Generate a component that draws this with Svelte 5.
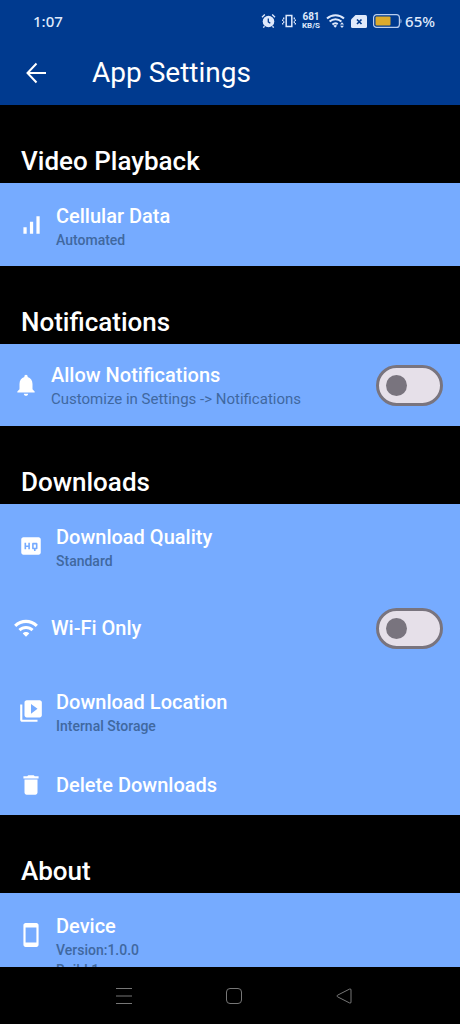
<script>
  let allowNotifications = $state(false);
  let wifiOnly = $state(false);
</script>

{#snippet icon(d)}
  <svg class="icon" viewBox="0 0 24 24" aria-hidden="true"><path {d} /></svg>
{/snippet}

{#snippet row(d, title, lines)}
  <button class="row" class:single={lines.length === 0}>
    {@render icon(d)}
    <span class="text">
      <span class="title">{title}</span>
      {#each lines as line}<span class="sub">{line}</span>{/each}
    </span>
  </button>
{/snippet}

<div class="screen">
  <header>
    <div class="status">
      <span class="time">1:07</span>
      <div class="indicators">
        <svg width="15" height="16" viewBox="0 0 15 16" aria-label="Alarm">
          <circle cx="7.5" cy="8.5" r="5.8" fill="#dfe9fb" />
          <path d="M1 4.2 3.8 1.6M14 4.2 11.2 1.6M3.5 13.2 2.3 14.6M11.5 13.2l1.2 1.4" stroke="#dfe9fb" stroke-width="1.4" fill="none" />
          <path d="M7.3 5.4v3.4l2 1.4" stroke="#003a8f" stroke-width="1.3" fill="none" />
        </svg>
        <svg width="14" height="14" viewBox="0 0 14 14" aria-label="Vibrate">
          <path d="M4.200 1.500h5.600v11H4.200z" stroke="#dfe9fb" stroke-width="1.5" fill="none" />
          <path d="M1.700 3.500v1.700M.7 5.500v1.600M1.700 7.300v1.600M.7 9v1.500M12.300 3.500v1.700M13.300 5.500v1.600M12.300 7.300v1.600M13.300 9v1.500" stroke="#dfe9fb" stroke-width="1.3" fill="none" />
        </svg>
        <span class="speed"><b>681</b><b class="unit">KB/S</b></span>
        <svg width="19" height="16" viewBox="0 0 19 16" aria-label="Wi-Fi">
          <path d="M1 5.5c4.700-4.400 12.300-4.400 17 0M3.600 8.600c3.400-3.100 8.400-3.100 11.800 0M6.400 11.500c1.900-1.600 3.700-1.600 5.300-.4" stroke="#dfe9fb" stroke-width="2" fill="none" />
          <path d="m7.300 12.700 1.900 2.100 1.900-2.100q-1.900-1.400-3.800 0zM14 11.500l2-2.200 2 2.200zM14 12.800l2 2.200 2-2.200z" fill="#dfe9fb" />
        </svg>
        <svg width="16" height="13" viewBox="0 0 16 13" aria-label="No SIM">
          <path d="M4.500 0H14.500A1.500 1.500 0 0 1 16 1.500V11.500A1.500 1.500 0 0 1 14.500 13H1.500A1.500 1.500 0 0 1 0 11.500V4.500z" fill="#dfe9fb" />
          <path d="m6 4.500 4.500 4.500M10.500 4.500 6 9" stroke="#003a8f" stroke-width="1.700" />
        </svg>
        <span class="charge">
          <svg width="29" height="14" viewBox="0 0 29 14" aria-label="Battery">
            <rect x=".6" y=".6" width="25.800" height="12.800" rx="3" fill="none" stroke="#b9cdee" stroke-width="1.200" />
            <rect x="2.500" y="2.500" width="15" height="9" rx="1" fill="#dcab2c" />
            <path d="M27.500 4.500q1 .5 1 2.500t-1 2.500z" fill="#b9cdee" />
          </svg>
          <span class="percent">65%</span>
        </span>
      </div>
    </div>
    <div class="bar">
      <button class="back" aria-label="Back">
        <svg viewBox="0 0 24 24" aria-hidden="true"><path d="M22 12H4M12.500 2.500 3.500 12l9 9.500" /></svg>
      </button>
      <h1>App Settings</h1>
    </div>
  </header>

  <main>
    <section>
      <h2>Video Playback</h2>
      <div class="panel">
        {@render row('M17 4h3v16h-3zM5 14h3v6H5zM11 9h3v11h-3z', 'Cellular Data', ['Automated'])}
      </div>
    </section>

    <section>
      <h2>Notifications</h2>
      <div class="panel">
        <label class="row toggle">
          {@render icon('M12 22c1.100 0 2-.9 2-2h-4c0 1.100.9 2 2 2zm6-6v-5c0-3.070-1.640-5.640-4.500-6.320V4c0-.83-.67-1.500-1.500-1.500s-1.500.67-1.500 1.500v.68C7.630 5.360 6 7.920 6 11v5l-2 2v1h16v-1l-2-2z')}
          <span class="text">
            <span class="title">Allow Notifications</span>
            <span class="sub hint">Customize in Settings -&gt; Notifications</span>
          </span>
          <input type="checkbox" role="switch" bind:checked={allowNotifications} />
        </label>
      </div>
    </section>

    <section>
      <h2>Downloads</h2>
      <div class="panel">
        {@render row('M19 4H5c-1.110 0-2 .9-2 2v12c0 1.100.89 2 2 2h14c1.100 0 2-.9 2-2V6c0-1.100-.9-2-2-2zm-8 11H9.500v-2h-2v2H6V9h1.500v2.500h2V9H11v6zm7-1c0 .55-.45 1-1 1h-.75v1.500h-1.500V15H14c-.55 0-1-.45-1-1v-4c0-.55.45-1 1-1h3c.55 0 1 .45 1 1v4zm-3.500-.5h2v-3h-2v3z', 'Download Quality', ['Standard'])}
        <label class="row toggle">
          {@render icon('M1 9l2 2c4.970-4.970 13.030-4.970 18 0l2-2C16.930 2.930 7.080 2.930 1 9zm8 8l3 3 3-3c-1.650-1.660-4.340-1.660-6 0zm-4-4l2 2c2.760-2.760 7.240-2.760 10 0l2-2C15.140 9.140 8.870 9.140 5 13z')}
          <span class="text"><span class="title">Wi-Fi Only</span></span>
          <input type="checkbox" role="switch" bind:checked={wifiOnly} />
        </label>
        {@render row('M4 6H2v14c0 1.100.9 2 2 2h14v-2H4V6zm16-4H8c-1.100 0-2 .9-2 2v12c0 1.100.9 2 2 2h12c1.100 0 2-.9 2-2V4c0-1.100-.9-2-2-2zm-8 12.500v-9l6 4.500-6 4.500z', 'Download Location', ['Internal Storage'])}
        {@render row('M6 19c0 1.100.9 2 2 2h8c1.100 0 2-.9 2-2V7H6v12zM19 4h-3.500l-1-1h-5l-1 1H5v2h14V4z', 'Delete Downloads', [])}
      </div>
    </section>

    <section>
      <h2>About</h2>
      <div class="panel">
        {@render row('M17 1.010L7 1c-1.100 0-2 .9-2 2v18c0 1.100.9 2 2 2h10c1.100 0 2-.9 2-2V3c0-1.100-.9-1.990-2-1.990zM17 19H7V5h10v14z', 'Device', ['Version:1.0.0', 'Build:1'])}
      </div>
    </section>
  </main>

  <nav aria-label="System navigation">
    <button aria-label="Recent apps"><svg viewBox="0 0 18 18"><path d="M1 1.500h16M1 9h16M1 16.500h16" /></svg></button>
    <button aria-label="Home"><svg viewBox="0 0 18 18"><rect x="1.500" y="1.500" width="15" height="15" rx="3.500" /></svg></button>
    <button aria-label="Previous"><svg viewBox="0 0 18 18"><path d="M2.500 8.200 14.700 2q1.300-.5 1.300 1v12q0 1.500-1.300 1L2.500 9.800q-1.300-.8 0-1.600z" /></svg></button>
  </nav>
</div>

<style>
  :global(body) {
    margin: 0;
    background: #000;
  }

  .screen {
    display: flex;
    flex-direction: column;
    height: 100vh;
    background: #000;
    color: #fff;
    font-family: Roboto, sans-serif;
  }

  button {
    margin: 0;
    padding: 0;
    border: 0;
    background: none;
    color: inherit;
    font: inherit;
    text-align: left;
    cursor: pointer;
  }

  header {
    flex: none;
    background: #003a8f;
  }

  .status {
    display: flex;
    align-items: center;
    justify-content: space-between;
    box-sizing: border-box;
    height: 40px;
    padding: 2px 25px 0 33px;
    color: #dfe9fb;
    font-family: "Noto Sans", sans-serif;
  }

  .time {
    font-size: 15px;
    font-weight: 500;
  }

  .indicators {
    display: flex;
    align-items: center;
    gap: 6px;
  }

  .speed {
    display: flex;
    flex-direction: column;
    align-items: center;
    font-family: Roboto, sans-serif;
    font-size: 10px;
    line-height: 10px;
  }

  .unit {
    font-size: 8px;
    line-height: 8px;
  }

  .charge {
    display: flex;
    align-items: center;
    gap: 3px;
  }

  .percent {
    font-size: 15px;
    line-height: 20px;
    font-weight: 500;
  }

  .bar {
    display: flex;
    align-items: center;
    gap: 44px;
    height: 65px;
    padding: 0 24px;
  }

  .back svg {
    display: block;
    width: 24px;
    height: 24px;
    fill: none;
    stroke: #fff;
    stroke-width: 2;
  }

  h1 {
    margin: 0;
    font-size: 28px;
    font-weight: 400;
  }

  main {
    flex: 1;
    min-height: 0;
    overflow-y: auto;
    scrollbar-width: none;
  }

  h2 {
    margin: 0;
    padding: 40px 21px 6px;
    font-size: 26px;
    line-height: 32px;
    font-weight: 500;
  }

  .panel {
    background: #76abff;
  }

  .row {
    display: flex;
    align-items: flex-start;
    gap: 12px;
    box-sizing: border-box;
    width: 100%;
    padding: 19px 18px 16px;
  }

  .icon {
    flex: none;
    width: 26px;
    height: 26px;
    margin-top: 10px;
    fill: #fff;
  }

  .single .icon {
    margin-top: 1px;
  }

  .toggle {
    align-items: center;
    min-height: 82px;
    padding: 17px 17px 17px 13px;
    cursor: pointer;
  }

  .toggle .icon {
    margin-top: 0;
  }

  .text {
    display: flex;
    flex: 1;
    flex-direction: column;
    min-width: 0;
  }

  .title {
    font-size: 20px;
    line-height: 28px;
    font-weight: 500;
  }

  .sub {
    color: #40689f;
    font-size: 14px;
    line-height: 20px;
    font-weight: 500;
  }

  .hint {
    font-size: 15px;
    font-weight: 400;
  }

  input {
    appearance: none;
    display: flex;
    align-items: center;
    flex: none;
    box-sizing: border-box;
    width: 67px;
    height: 41px;
    margin: 0;
    padding: 0 7px;
    border: 3px solid #79747e;
    border-radius: 21px;
    background: #e6e0e9;
    cursor: pointer;
  }

  input::before {
    content: "";
    width: 21px;
    height: 21px;
    border-radius: 50%;
    background: #79747e;
  }

  input:checked {
    justify-content: flex-end;
  }

  nav {
    display: flex;
    flex: none;
    align-items: center;
    justify-content: center;
    gap: 92px;
    height: 57px;
    padding-left: 8px;
  }

  nav svg {
    display: block;
    width: 18px;
    height: 18px;
    fill: none;
    stroke: #777;
    stroke-width: 1;
  }
</style>
